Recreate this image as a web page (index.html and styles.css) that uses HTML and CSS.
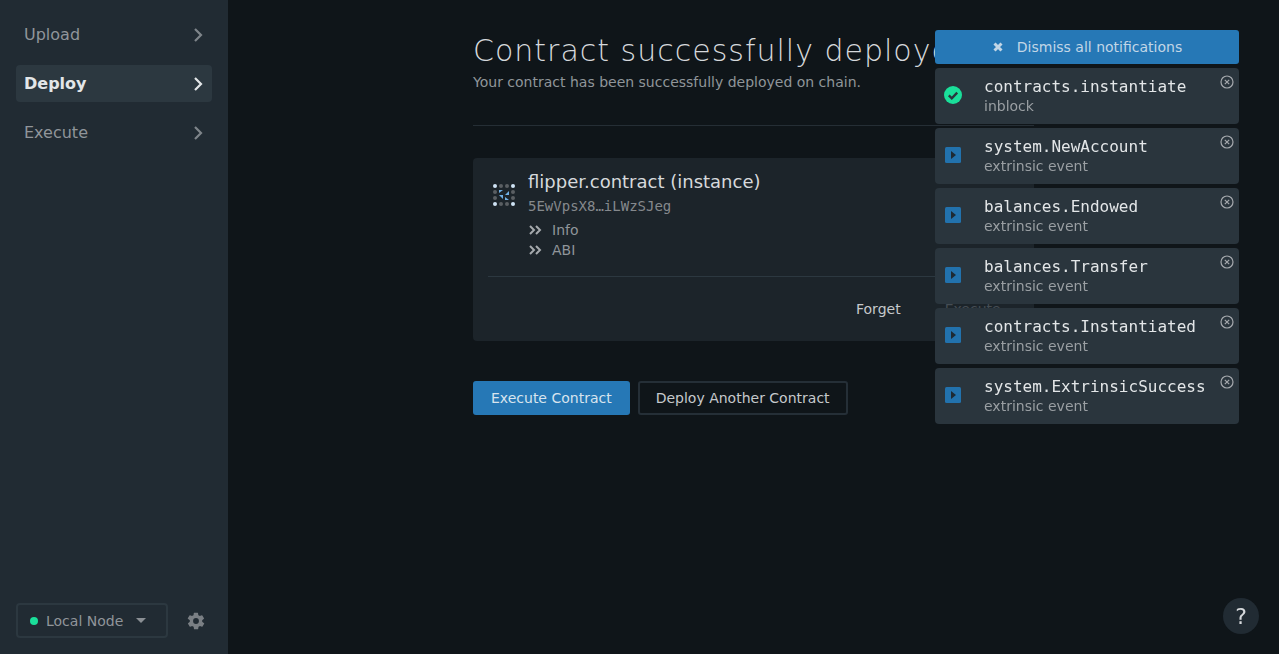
FILE: index.html
```html
<!DOCTYPE html>
<html lang="en">
<head>
<meta charset="utf-8">
<title>Contract successfully deployed</title>
<link rel="stylesheet" href="styles.css">
</head>
<body>
<div class="app">
  <aside class="sidebar">
    <nav class="nav">
      <a class="nav-item"><span>Upload</span><svg class="chev" viewBox="0 0 12 16"><path d="M3 2l6 6-6 6"/></svg></a>
      <a class="nav-item active"><span>Deploy</span><svg class="chev" viewBox="0 0 12 16"><path d="M3 2l6 6-6 6"/></svg></a>
      <a class="nav-item"><span>Execute</span><svg class="chev" viewBox="0 0 12 16"><path d="M3 2l6 6-6 6"/></svg></a>
    </nav>
    <div class="side-foot">
      <div class="node"><i class="dot"></i><span class="node-name">Local Node</span><i class="caret"></i></div>
      <svg class="gear" viewBox="0 0 24 24"><path d="M19.4 13a7.6 7.6 0 0 0 0-2l2.1-1.6a.5.5 0 0 0 .1-.7l-2-3.4a.5.5 0 0 0-.6-.2l-2.5 1a7.300 7.300 0 0 0-1.700-1l-.4-2.700a.5.5 0 0 0-.5-.4h-4a.5.500 0 0 0-.5.400l-.4 2.700a7.300 7.300 0 0 0-1.700 1l-2.500-1a.5.500 0 0 0-.6.2l-2 3.400a.5.500 0 0 0 .1.700L4.600 11a7.600 7.600 0 0 0 0 2l-2.100 1.600a.5.500 0 0 0-.1.700l2 3.400a.5.500 0 0 0 .6.200l2.500-1a7.300 7.300 0 0 0 1.700 1l.4 2.700a.5.500 0 0 0 .5.400h4a.5.500 0 0 0 .5-.400l.4-2.700a7.300 7.300 0 0 0 1.700-1l2.500 1a.5.500 0 0 0 .6-.200l2-3.400a.5.500 0 0 0-.1-.700zM12 15.500a3.500 3.500 0 1 1 0-7 3.500 3.500 0 0 1 0 7z"/></svg>
    </div>
  </aside>
  <main class="main">
    <div class="content">
      <header class="head">
        <h1>Contract successfully deployed</h1>
        <p>Your contract has been successfully deployed on chain.</p>
      </header>
      <section class="card">
        <div class="card-body">
          <svg class="identicon" viewBox="0 0 24 24">
            <g class="d-light"><circle cx="3" cy="3" r="2"/><circle cx="21" cy="3" r="2"/><circle cx="3" cy="21" r="2"/><circle cx="21" cy="21" r="2"/></g>
            <g class="d-grey"><circle cx="9" cy="3" r="2"/><circle cx="15" cy="3" r="2"/><circle cx="3" cy="9" r="2"/><circle cx="21" cy="9" r="2"/><circle cx="3" cy="15" r="2"/><circle cx="21" cy="15" r="2"/><circle cx="9" cy="21" r="2"/><circle cx="15" cy="21" r="2"/></g>
            <g class="d-blue"><path d="M7 7h4l-4 3z"/><path d="M17 8v4l-4 0z"/><path d="M7 12h4v4z"/><path d="M13 14l4 3h-4z"/></g>
          </svg>
          <div class="info">
            <div class="name">flipper.contract (instance)</div>
            <div class="addr">5EwVpsX8…iLWzSJeg</div>
            <div class="toggle"><svg viewBox="0 0 14 12"><path d="M2 2l4 4-4 4M8 2l4 4-4 4"/></svg><span>Info</span></div>
            <div class="toggle"><svg viewBox="0 0 14 12"><path d="M2 2l4 4-4 4M8 2l4 4-4 4"/></svg><span>ABI</span></div>
          </div>
        </div>
        <div class="card-foot"><span class="forget">Forget</span><span class="exec">Execute</span></div>
      </section>
      <div class="actions">
        <a class="btn primary">Execute Contract</a>
        <a class="btn outline">Deploy Another Contract</a>
      </div>
    </div>
  </main>
</div>
<div class="notices">
  <button class="dismiss"><svg viewBox="0 0 12 12"><path d="M2.500 2.500l7 7M9.500 2.500l-7 7"/></svg><span>Dismiss all notifications</span></button>
  <div class="notice">
    <svg class="n-icon" viewBox="0 0 18 18"><circle class="ok" cx="9" cy="9" r="9"/><path class="tick" d="M4.800 9.300l3 3 5.400-5.600"/></svg>
    <div class="n-text"><div class="n-title">contracts.instantiate</div><div class="n-sub">inblock</div></div>
    <svg class="n-close" viewBox="0 0 14 14"><circle cx="7" cy="7" r="6"/><path d="M4.800 4.800l4.400 4.400M9.200 4.800l-4.400 4.400"/></svg>
  </div>
  <div class="notice">
    <svg class="n-icon" viewBox="0 0 18 18"><rect class="sq" x="1" y="1" width="16" height="16" rx="1.500"/><path class="tri" d="M7 5l5 4-5 4z"/></svg>
    <div class="n-text"><div class="n-title">system.NewAccount</div><div class="n-sub">extrinsic event</div></div>
    <svg class="n-close" viewBox="0 0 14 14"><circle cx="7" cy="7" r="6"/><path d="M4.800 4.800l4.400 4.400M9.200 4.800l-4.400 4.400"/></svg>
  </div>
  <div class="notice">
    <svg class="n-icon" viewBox="0 0 18 18"><rect class="sq" x="1" y="1" width="16" height="16" rx="1.500"/><path class="tri" d="M7 5l5 4-5 4z"/></svg>
    <div class="n-text"><div class="n-title">balances.Endowed</div><div class="n-sub">extrinsic event</div></div>
    <svg class="n-close" viewBox="0 0 14 14"><circle cx="7" cy="7" r="6"/><path d="M4.800 4.800l4.400 4.400M9.200 4.800l-4.400 4.400"/></svg>
  </div>
  <div class="notice">
    <svg class="n-icon" viewBox="0 0 18 18"><rect class="sq" x="1" y="1" width="16" height="16" rx="1.500"/><path class="tri" d="M7 5l5 4-5 4z"/></svg>
    <div class="n-text"><div class="n-title">balances.Transfer</div><div class="n-sub">extrinsic event</div></div>
    <svg class="n-close" viewBox="0 0 14 14"><circle cx="7" cy="7" r="6"/><path d="M4.800 4.800l4.400 4.400M9.200 4.800l-4.400 4.400"/></svg>
  </div>
  <div class="notice">
    <svg class="n-icon" viewBox="0 0 18 18"><rect class="sq" x="1" y="1" width="16" height="16" rx="1.500"/><path class="tri" d="M7 5l5 4-5 4z"/></svg>
    <div class="n-text"><div class="n-title">contracts.Instantiated</div><div class="n-sub">extrinsic event</div></div>
    <svg class="n-close" viewBox="0 0 14 14"><circle cx="7" cy="7" r="6"/><path d="M4.800 4.800l4.400 4.400M9.200 4.800l-4.400 4.400"/></svg>
  </div>
  <div class="notice">
    <svg class="n-icon" viewBox="0 0 18 18"><rect class="sq" x="1" y="1" width="16" height="16" rx="1.500"/><path class="tri" d="M7 5l5 4-5 4z"/></svg>
    <div class="n-text"><div class="n-title">system.ExtrinsicSuccess</div><div class="n-sub">extrinsic event</div></div>
    <svg class="n-close" viewBox="0 0 14 14"><circle cx="7" cy="7" r="6"/><path d="M4.800 4.800l4.400 4.400M9.200 4.800l-4.400 4.400"/></svg>
  </div>
</div>
<button class="help">?</button>
</body>
</html>
```
FILE: styles.css
```css
* { box-sizing: border-box; }
html, body { margin: 0; height: 100%; overflow: hidden; }
body {
  font-family: "DejaVu Sans", sans-serif;
  background: #0f1519;
  color: #d6d9dc;
  font-size: 14px;
}
.app { display: flex; height: 654px; }
.sidebar {
  width: 228px;
  flex: none;
  background: #212b33;
  padding: 16px 16px 16px;
  display: flex;
  flex-direction: column;
  justify-content: space-between;
}
.nav { display: flex; flex-direction: column; gap: 12px; }
.nav-item {
  height: 37px;
  padding: 0 8px;
  border-radius: 4px;
  display: flex;
  align-items: center;
  justify-content: space-between;
  font-size: 16px;
  color: #90959a;
}
.nav-item.active { background: #2c3840; color: #e3e6e8; font-weight: 700; }
.chev { width: 12px; height: 16px; fill: none; stroke: #7e848a; stroke-width: 2.200; }
.nav-item.active .chev { stroke: #e3e6e8; }
.side-foot { display: flex; align-items: center; gap: 18px; margin-bottom: 0; }
.node {
  width: 152px;
  height: 35px;
  border: 2px solid #2c3840;
  border-radius: 4px;
  display: flex;
  align-items: center;
  padding-left: 12px;
  color: #90959a;
}
.dot { width: 8px; height: 8px; border-radius: 50%; background: #1adf9a; margin-right: 8px; }
.node-name { white-space: nowrap; }
.caret {
  margin-left: 13px;
  border-left: 5px solid transparent;
  border-right: 5px solid transparent;
  border-top: 5px solid #8a8f94;
}
.gear { width: 20px; height: 20px; fill: #7a7f84; }
.main { flex: 1; display: flex; justify-content: center; }
.content { width: 561px; padding-top: 30px; }
.head { padding-bottom: 33px; border-bottom: 1px solid #252e35; }
.head h1 { margin: 0; font-size: 30px; line-height: 42px; font-weight: 200; letter-spacing: 1px; color: #d6d9dc; }
.head p { margin: 0; line-height: 20px; font-size: 14px; color: #90959a; }
.card {
  margin-top: 32px;
  height: 183px;
  background: #1c242a;
  border-radius: 4px;
  padding: 12px 15px 0;
  display: flex;
  flex-direction: column;
}
.card-body { display: flex; flex: 1; border-bottom: 1px solid #2c3840; }
.identicon { width: 24px; height: 24px; margin: 13px 0 0 4px; }
.d-light circle { fill: #cfe3f5; }
.d-grey circle { fill: #5a5f63; }
.d-blue path { fill: #6fb0e6; }
.info { margin-left: 12px; }
.name { font-size: 18px; line-height: 24px; color: #d6d9dc; }
.addr { font-family: "DejaVu Sans Mono", monospace; font-size: 14px; line-height: 20px; margin-top: 2px; margin-bottom: 4px; color: #85898d; }
.toggle { display: flex; align-items: center; height: 20px; color: #90959a; font-size: 14px; }
.toggle svg { width: 14px; height: 12px; fill: none; stroke: #a5a9ad; stroke-width: 2; margin-right: 10px; }
.card-foot { height: 64px; padding-left: 368px; display: flex; align-items: center; }
.forget { color: #c6c9cc; margin-right: 44px; }
.exec { color: #454d54; }
.actions { margin-top: 40px; display: flex; gap: 8px; }
.btn { height: 34px; border-radius: 3px; display: flex; align-items: center; padding: 0 18px; font-size: 14px; white-space: nowrap; }
.btn.primary { background: #2678b6; color: #d8e4ee; }
.btn.outline { border: 2px solid #252f37; color: #c6c9cc; padding: 0 16px; }
.notices { position: fixed; top: 30px; right: 40px; width: 304px; display: flex; flex-direction: column; gap: 4px; }
.dismiss {
  height: 34px;
  border: 0;
  border-radius: 3px;
  background: #2678b6;
  color: #c2d6e6;
  font: 14px "DejaVu Sans", sans-serif;
  display: flex;
  align-items: center;
  justify-content: center;
  gap: 13px;
  padding: 0;
}
.dismiss svg { width: 12px; height: 12px; fill: none; stroke: #c2d6e6; stroke-width: 3; }
.notice { height: 56px; background: #2a353d; border-radius: 4px; display: flex; position: relative; }
.n-icon { width: 18px; height: 18px; margin: 18px 0 0 9px; flex: none; }
.ok { fill: #1adf9a; }
.tick { fill: none; stroke: #2a353d; stroke-width: 2.400; }
.sq { fill: #2272ad; }
.tri { fill: #1e2a33; }
.n-text { margin-left: 22px; padding-top: 9px; }
.n-title { font-family: "DejaVu Sans Mono", monospace; font-size: 16px; line-height: 20px; color: #e3e6e8; white-space: nowrap; }
.n-sub { font-size: 14px; line-height: 19px; color: #9a9fa3; }
.n-close { position: absolute; top: 7px; right: 5px; width: 14px; height: 14px; fill: none; stroke: #a5a9ad; stroke-width: 1.200; }
.help {
  position: fixed;
  right: 20px;
  bottom: 20px;
  width: 36px;
  height: 36px;
  border-radius: 50%;
  border: 0;
  padding: 0;
  background: #212b33;
  color: #d6d9dc;
  font: 22px "DejaVu Sans", sans-serif;
}
```
